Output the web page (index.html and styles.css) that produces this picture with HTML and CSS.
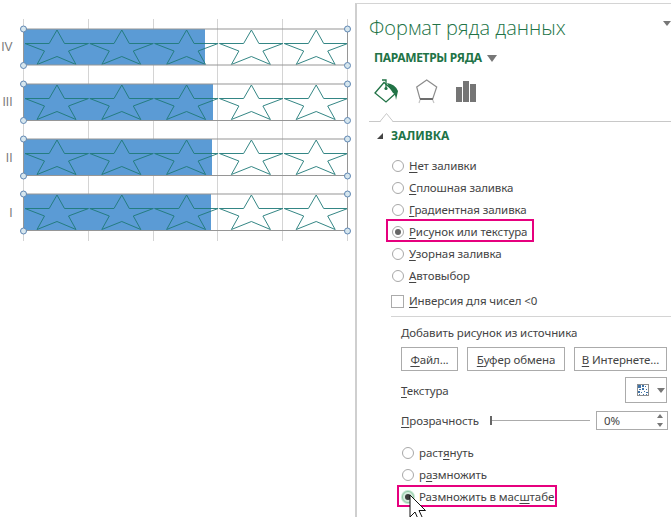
FILE: index.html
```html
<!DOCTYPE html>
<html>
<head>
  <title>Формат ряда данных</title>
  <link rel="stylesheet" href="styles.css">
</head>
<body>
  <div class="chart">
    <svg width="355" height="517" viewBox="0 0 355 517">
      <defs>
        <path id="star" d="M33.500 30 L25.700 43.500 L1.500 43.500 L21 51 L13.500 64.500 L33.500 56.500 L52.500 64.500 L45 51 L65 43.500 L41 43.500 Z" transform="translate(23.500 0)"/>
        <g id="stars">
          <use href="#star"/>
          <use href="#star" x="64.800"/>
          <use href="#star" x="129.600"/>
          <use href="#star" x="194.400"/>
          <use href="#star" x="259.200"/>
        </g>
      </defs>

      <g class="grid">
        <line x1="23.500" y1="19" x2="23.500" y2="241"/>
        <line x1="88.500" y1="19" x2="88.500" y2="241"/>
        <line x1="153.500" y1="19" x2="153.500" y2="241"/>
        <line x1="217.500" y1="19" x2="217.500" y2="241"/>
        <line x1="282.500" y1="19" x2="282.500" y2="241"/>
        <line x1="347.500" y1="19" x2="347.500" y2="241"/>
      </g>

      <g class="bar">
        <rect class="fill" x="24" y="29" width="181" height="36"/>
        <use class="stars" href="#stars"/>
        <rect class="frame" x="23.500" y="29" width="324" height="36"/>
      </g>
      <g class="bar" transform="translate(0 55)">
        <rect class="fill" x="24" y="29" width="189" height="36"/>
        <use class="stars" href="#stars"/>
        <rect class="frame" x="23.500" y="29" width="324" height="36.500"/>
      </g>
      <g class="bar" transform="translate(0 110)">
        <rect class="fill" x="24" y="29" width="188" height="36"/>
        <use class="stars" href="#stars"/>
        <rect class="frame" x="23.500" y="29" width="324" height="36.500"/>
      </g>
      <g class="bar" transform="translate(0 165)">
        <rect class="fill" x="24" y="29" width="187" height="36"/>
        <use class="stars" href="#stars"/>
        <rect class="frame" x="23.500" y="29" width="324" height="36.500"/>
      </g>

      <g class="handles">
        <circle cx="23.500" cy="29" r="3"/><circle cx="347.500" cy="29" r="3"/>
        <circle cx="23.500" cy="65.500" r="3"/><circle cx="347.500" cy="65.500" r="3"/>
        <circle cx="23.500" cy="84" r="3"/><circle cx="347.500" cy="84" r="3"/>
        <circle cx="23.500" cy="120.500" r="3"/><circle cx="347.500" cy="120.500" r="3"/>
        <circle cx="23.500" cy="139" r="3"/><circle cx="347.500" cy="139" r="3"/>
        <circle cx="23.500" cy="176" r="3"/><circle cx="347.500" cy="176" r="3"/>
        <circle cx="23.500" cy="194" r="3"/><circle cx="347.500" cy="194" r="3"/>
        <circle cx="23.500" cy="231" r="3"/><circle cx="347.500" cy="231" r="3"/>
      </g>

      <g class="cats">
        <text x="12.500" y="50.500">IV</text>
        <text x="12.500" y="105.500">III</text>
        <text x="12.500" y="161.500">II</text>
        <text x="12.500" y="216.500">I</text>
      </g>
    </svg>
  </div>

  <div class="panel">
    <div class="panel-top">
      <h1>Формат ряда данных</h1>
      <span class="arrow title-arrow"></span>
    </div>
    <div class="series-opts">ПАРАМЕТРЫ РЯДА <span class="arrow big-arrow"></span></div>

    <div class="tabs">
      <svg width="24" height="26" viewBox="0 0 24 26">
        <path d="M1 14 L10 3.500 L22 14 L12 23 Z" fill="none" stroke="#217346" stroke-width="1.300"/>
        <path d="M8 1 H12 V9" fill="none" stroke="#217346" stroke-width="1.300"/>
        <circle cx="12" cy="9.500" r="1.600" fill="#217346"/>
        <path d="M13 4 Q21 5 24 12 L22 21 Q21.500 15 19 14 L15 8 Z" fill="#217346"/>
      </svg>
      <svg width="24" height="26" viewBox="0 0 24 26">
        <path d="M11.700 1 L21.700 8 L17.700 20 H5 L1.700 8 Z" fill="none" stroke="#8c8c8c" stroke-width="1.200"/>
        <path d="M5 20 H18" stroke="#6d6d6d" stroke-width="2"/>
        <path d="M5 21 L4 24 M17.700 21 L19 24" stroke="#c4c4c4" stroke-width="1.200"/>
      </svg>
      <svg width="20" height="26" viewBox="0 0 20 26">
        <rect x="0" y="8" width="6" height="15" fill="#757575"/>
        <rect x="7" y="2" width="6" height="21" fill="#757575"/>
        <rect x="14" y="5" width="6" height="18" fill="#757575"/>
      </svg>
    </div>
    <div class="tab-rule">
      <svg class="notch" width="13" height="9" viewBox="0 0 13 9">
        <path d="M0.500 9 L0.500 8.500 L6.500 0.500 L12.500 8.500 L12.500 9 Z" fill="#fff"/>
        <path d="M0 8.500 L6.500 0.500 L13 8.500" fill="none" stroke="#c8c8c8"/>
      </svg>
    </div>

    <div class="section-head"><span class="corner"></span>ЗАЛИВКА</div>

    <div class="fill-types">
      <label class="opt"><span class="radio"></span><span><u>Н</u>ет заливки</span></label>
      <label class="opt"><span class="radio"></span><span><u>С</u>плошная заливка</span></label>
      <label class="opt"><span class="radio"></span><span><u>Г</u>радиентная заливка</span></label>
      <label class="opt mark-fill"><span class="radio on"></span><span><u>Р</u>исунок или текстура</span></label>
      <label class="opt"><span class="radio"></span><span><u>У</u>зорная заливка</span></label>
      <label class="opt"><span class="radio"></span><span><u>А</u>втовыбор</span></label>
    </div>
    <label class="opt check-row"><span class="check"></span><span><u>И</u>нверсия для чисел &lt;0</span></label>
    <div class="rule"></div>

    <div class="source">
      <div class="source-title">Добавить рисунок из источника</div>
      <div class="btn-row">
        <button class="file-btn"><u>Ф</u>айл...</button>
        <button class="clip-btn"><u>Б</u>уфер обмена</button>
        <button class="web-btn"><u>В</u> Интернете...</button>
      </div>
      <div class="field tex-row">
        <span><u>Т</u>екстура</span>
        <div class="tex-btn">
          <svg width="12" height="12" viewBox="0 0 12 12">
            <rect x="0.500" y="0.500" width="11" height="11" fill="#fff" stroke="#8f8f8f"/>
            <path d="M1 1h3v3H1zM5 1h2v2H5zM8 2h1v1H8zM2 5h2v1H2zM5 4h2v2H5zM9 5h1v1H9zM1 7h2v2H1zM4 8h1v1H4zM7 7h1v1H7zM9 8h2v1H9zM2 10h1v1H2zM6 10h1v1H6zM9 10h1v1H9z" fill="#3f73a8"/>
          </svg>
          <span class="arrow"></span>
        </div>
      </div>
      <div class="field alpha-row">
        <span class="alpha-label"><u>П</u>розрачность</span>
        <div class="slider"><span class="thumb"></span></div>
        <div class="spin">
          <span>0%</span>
          <span class="spin-arrows"><i class="up"></i><i class="down"></i></span>
        </div>
      </div>
      <div class="modes">
        <label class="opt"><span class="radio"></span><span>раст<u>я</u>нуть</span></label>
        <label class="opt"><span class="radio"></span><span>р<u>а</u>змножить</span></label>
        <label class="opt mark-mode"><span class="radio on focus"></span><span>Размножить в мас<u>ш</u>табе</span></label>
      </div>
    </div>

    <svg class="cursor" width="19" height="28" viewBox="0 0 19 28">
      <path d="M1 1 L1 23 L6 18 L10 27 L14 25 L10 16.500 L16.500 16.500 Z" fill="#fff" stroke="#111" stroke-width="1"/>
    </svg>
  </div>
</body>
</html>
```
FILE: styles.css
```css
html, body { margin: 0; padding: 0; }
body { width: 671px; height: 517px; overflow: hidden; display: flex; background: #fff; font-family: "Noto Sans", "Open Sans", sans-serif; font-size: 11.5px; letter-spacing: -0.1px; color: #444; }
button { font: inherit; letter-spacing: inherit; color: inherit; background: #fff; border: 1px solid #ababab; padding: 0; height: 24px; }
u { text-underline-offset: 2px; }

/* chart */
.chart { width: 355px; flex: none; }
.chart svg { display: block; }
.grid line { stroke: #d4d4d4; stroke-width: 1; }
.fill { fill: #5b9bd5; }
.stars { fill: none; stroke: #1f7a78; stroke-width: 1; opacity: .9; }
.frame { fill: none; stroke: #969696; stroke-width: 1; }
.handles circle { fill: #d6e6ee; stroke: #5f86b3; stroke-width: 1; }
.cats text { font-family: "Liberation Sans", sans-serif; font-size: 12px; fill: #7a7a7a; text-anchor: end; letter-spacing: 0; }

/* panel */
.panel { position: relative; flex: 1; border-left: 2px solid #cfcfcf; border-top: 1px solid #d4d4d4; margin-top: 3px; padding-left: 12px; }
.panel-top { display: flex; justify-content: space-between; padding-top: 9px; height: 32px; }
h1 { margin: 0; font-family: "Open Sans", sans-serif; font-weight: 300; font-size: 20px; letter-spacing: 0; line-height: 30px; color: #217346; }
.arrow { display: inline-block; border-left: 4px solid transparent; border-right: 4px solid transparent; border-top: 5px solid #777; }
.title-arrow { margin: 8px 0 0; }
.big-arrow { margin: 0 0 0 3px; border-left-width: 5px; border-right-width: 5px; border-top-width: 7px; }
.series-opts { margin: 4px 0 0 5px; font-weight: 700; font-size: 12px; letter-spacing: -0.35px; line-height: 18px; color: #217346; }
.tabs { display: flex; gap: 17px; margin: 12px 0 0 5px; height: 26px; }
.tab-rule { position: relative; height: 1px; margin-top: 16px; background: #c8c8c8; }
.notch { position: absolute; left: 11px; top: -8px; }
.section-head { display: flex; align-items: center; margin: 5px 0 0 8px; font-weight: 700; font-size: 12px; letter-spacing: 0; line-height: 18px; color: #217346; }
.corner { width: 0; height: 0; margin-right: 8px; border-left: 6px solid transparent; border-bottom: 6px solid #444; }

.fill-types { margin: 10px 0 0 23px; }
.opt { display: flex; align-items: center; gap: 5px; height: 22px; width: fit-content; position: relative; }
.opt > span:last-child { margin-top: -2px; }
.radio { position: relative; box-sizing: border-box; width: 12px; height: 12px; border: 1px solid #a8a8a8; border-radius: 50%; flex: none; background: #fff; }
.radio.on::after { content: ""; position: absolute; left: 2px; top: 2px; width: 6px; height: 6px; border-radius: 50%; background: #666; }
.radio.focus { border-color: #8fc9a5; box-shadow: 0 0 0 1px #c6e5d1; background: #d5ecdd; }
.radio.focus::after { background: #3c3c3c; }
.mark-fill::before, .mark-mode::before { content: ""; position: absolute; border: 2px solid #e6007e; }
.mark-fill::before { left: -6px; right: -7px; top: -2px; bottom: 1px; }
.mark-mode::before { left: -5px; right: -3px; top: -1px; bottom: 1px; }
.check-row { margin: 2px 0 0 22px; height: 25px; }
.check { box-sizing: border-box; width: 13px; height: 13px; border: 1px solid #ababab; flex: none; }
.rule { height: 1px; margin: 2px 0 0 22px; background: #d4d4d4; }

.source { margin-left: 32px; }
.source-title { margin-top: 6px; line-height: 20px; }
.btn-row { display: flex; margin-top: 4px; }
.file-btn { width: 57px; margin-right: 9px; }
.clip-btn { width: 98px; margin-right: 9px; }
.web-btn { width: 93px; }
.field { display: flex; align-items: center; }
.tex-row { justify-content: space-between; margin: 6px 4px 0 0; height: 26px; }
.tex-btn { display: flex; align-items: center; gap: 8px; box-sizing: border-box; width: 42px; height: 26px; padding-left: 11px; border: 1px solid #ababab; }
.alpha-row { margin-top: 8px; height: 19px; }
.alpha-label { width: 89px; }
.slider { position: relative; width: 100px; height: 1px; background: #ababab; }
.thumb { position: absolute; left: 0; top: -4px; width: 2px; height: 9px; background: #666; }
.spin { display: flex; align-items: center; justify-content: space-between; box-sizing: border-box; width: 72px; height: 19px; margin-left: 6px; padding: 0 4px 0 7px; border: 1px solid #ababab; }
.spin-arrows { display: flex; flex-direction: column; gap: 5px; }
.spin-arrows i { display: block; border-left: 3px solid transparent; border-right: 3px solid transparent; }
.spin-arrows .up { border-bottom: 4px solid #777; }
.spin-arrows .down { border-top: 4px solid #777; }
.modes { margin: 12px 0 0 1px; }

/* pointer sits over the last radio */
.cursor { position: absolute; left: 52px; top: 490px; }
```
